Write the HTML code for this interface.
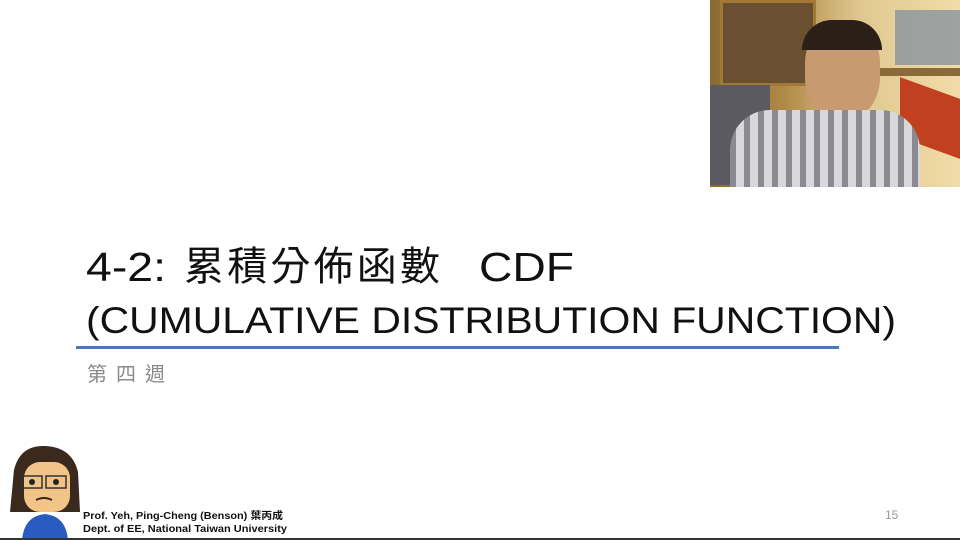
<!DOCTYPE html>
<html><head><meta charset="utf-8"><style>
body{margin:0;width:960px;height:540px;overflow:hidden;background:#fff;position:relative;font-family:"Liberation Sans","Noto Sans CJK TC",sans-serif}
.v{position:absolute;left:710px;top:0;width:250px;height:187px;overflow:hidden;background:#c9a15a}
</style></head><body>
<svg width="960" height="540" style="position:absolute;left:0;top:0">
<text x="86" y="281" font-size="41" font-family="Liberation Sans, sans-serif" fill="#111" textLength="80" lengthAdjust="spacingAndGlyphs">4-2:</text>
<text x="184" y="280" font-size="40" font-family="Noto Sans CJK TC, sans-serif" fill="#111" textLength="256" lengthAdjust="spacing">累積分佈函數</text>
<text x="479" y="281" font-size="41" font-family="Liberation Sans, sans-serif" fill="#111" textLength="95" lengthAdjust="spacingAndGlyphs">CDF</text>
<text x="86" y="333" font-size="37" font-family="Liberation Sans, sans-serif" fill="#111" textLength="810" lengthAdjust="spacingAndGlyphs">(CUMULATIVE DISTRIBUTION FUNCTION)</text>
<rect x="76" y="346" width="763" height="3" fill="#4a7ab0"/>
<text x="87" y="381" font-size="20" font-family="Noto Sans CJK TC, sans-serif" fill="#8a8a8a" textLength="78" lengthAdjust="spacing">第四週</text>
<text x="885" y="519" font-size="12" fill="#999" font-family="Liberation Sans, sans-serif">15</text>
<text x="83" y="519" font-size="10" font-weight="bold" fill="#111" font-family="Liberation Sans, Noto Sans CJK TC, sans-serif" textLength="200" lengthAdjust="spacingAndGlyphs">Prof. Yeh, Ping-Cheng (Benson) 葉丙成</text>
<text x="83" y="532" font-size="10" font-weight="bold" fill="#111" font-family="Liberation Sans, sans-serif" textLength="204" lengthAdjust="spacingAndGlyphs">Dept. of EE,  National Taiwan University</text>
<path d="M14,470 Q20,445 45,446 Q72,447 78,472 L80,512 L10,512 Z" fill="#3a2a1e"/>
<rect x="24" y="462" width="46" height="50" rx="16" fill="#f2c488"/>
<rect x="22" y="476" width="20" height="12" fill="none" stroke="#333" stroke-width="1.5"/>
<rect x="46" y="476" width="20" height="12" fill="none" stroke="#333" stroke-width="1.5"/>
<circle cx="32" cy="482" r="3" fill="#222"/><circle cx="56" cy="482" r="3" fill="#222"/>
<path d="M36,500 Q44,496 52,500" stroke="#3a2a1e" stroke-width="2" fill="none"/>
<path d="M14,470 L22,512 L12,512Z M76,470 L70,512 L80,512Z" fill="#3a2a1e"/>
<path d="M22,540 Q24,516 45,514 Q66,516 68,540 Z" fill="#2a5cc0"/>
<rect x="0" y="538" width="960" height="2" fill="#333"/>
</svg>
<div class="v">
<div style="position:absolute;left:0;top:0;width:250px;height:187px;background:linear-gradient(90deg,#8a6a30 0,#b08a48 30%,#e0c890 60%,#f0dca8 100%)"></div>
<div style="position:absolute;left:10px;top:0;width:90px;height:80px;background:#6a5030;border:3px solid #a07838"></div>
<div style="position:absolute;left:0;top:85px;width:60px;height:100px;background:#5a5a60"></div>
<div style="position:absolute;left:160px;top:68px;width:90px;height:8px;background:#8a6a38"></div>
<div style="position:absolute;left:185px;top:10px;width:65px;height:55px;background:#7a8aa0;opacity:.7"></div>
<div style="position:absolute;left:190px;top:88px;width:60px;height:60px;background:#c04020;transform:skewY(20deg)"></div>
<div style="position:absolute;left:95px;top:25px;width:75px;height:95px;border-radius:40% 40% 45% 45%;background:#c89a70"></div>
<div style="position:absolute;left:92px;top:20px;width:80px;height:30px;border-radius:40px 40px 0 0;background:#2a2018"></div>
<div style="position:absolute;left:20px;top:110px;width:190px;height:77px;border-radius:40px 40px 0 0;background:repeating-linear-gradient(90deg,#8a8a90 0 6px,#d8d8dc 6px 14px)"></div>
</div>
</body></html>
